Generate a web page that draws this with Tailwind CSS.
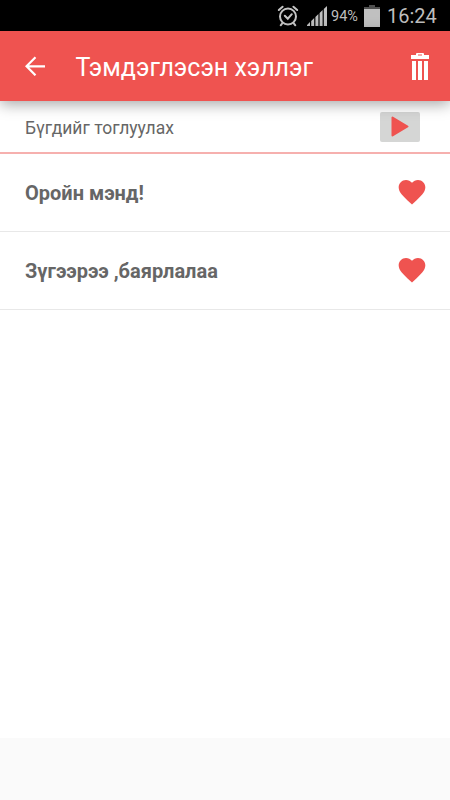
<!DOCTYPE html>
<html lang="mn">
<head>
<meta charset="utf-8">
<title>Тэмдэглэсэн хэллэг</title>
<script src="https://cdn.jsdelivr.net/npm/@tailwindcss/browser@4"></script>
</head>
<body class="bg-[#fafafa] font-[Roboto,'Noto_Sans',sans-serif]">
<div class="flex h-[800px] w-[450px] flex-col overflow-hidden">
  <div class="flex h-[31px] shrink-0 items-center justify-end bg-black pr-[13px] text-[#bebebe]">
    <svg class="mr-2 h-[22px] w-[22px]" viewBox="0 0 22 22" fill="none" stroke="#c4c4c4" stroke-width="2" stroke-linecap="round">
      <circle cx="11" cy="11.5" r="8"/>
      <path d="M7.8 10.7l3 3 4-4.5M1.8 5l3.8-3.3M20.2 5l-3.8-3.3M5.2 18.3l-1.5 2M16.8 18.3l1.5 2"/>
    </svg>
    <svg class="mr-1 h-5 w-5" viewBox="0 0 20 20" fill="#c0c0c0">
      <path d="M0 20v-1l3-3v4zM4.2 20v-5l3-3v8zM8.4 20V11l3-3v12zM12.6 20V7l3-3v16zM16.8 20V3L20 0v20z"/>
    </svg>
    <span class="w-[33px] pt-[3px] text-[14.5px] leading-none">94%</span>
    <svg class="mr-[7px] h-[24px] w-[16px]" viewBox="0 0 16 24"><path fill="#505050" d="M5 1h6v2h5v3H0V3h5z"/><path fill="#c0c0c0" d="M0 5h16v18H0z"/></svg>
    <span class="w-[50px] text-[20px] leading-none">16:24</span>
  </div>
  <header class="relative z-10 flex h-[70px] shrink-0 items-center bg-[#ef5350] pr-[21px] pl-[25px] text-white shadow-[0_3px_14px_rgba(0,0,0,0.36)]">
    <svg class="h-5 w-5" viewBox="0 0 20 20" fill="none" stroke="white" stroke-width="2.2"><path d="M10.5 1.3l-9 9 9 9M1.5 10.3H20"/></svg>
    <h1 class="ml-[30.5px] flex-1 pt-[2px] text-[25px] leading-none whitespace-nowrap">Тэмдэглэсэн хэллэг</h1>
    <svg class="h-[27px] w-[18px]" viewBox="0 0 18 27" fill="white" fill-rule="evenodd"><path d="M0 2h5V1q0-1 1-1h6q1 0 1 1v1h5v4H0zM7 1.5h4v1H7zM1 8h4v19H1zM7 8h4v19H7zM13 8h4v19h-4z"/></svg>
  </header>
  <main class="h-[637px] shrink-0 bg-white text-[#666]">
    <div class="flex h-[53px] items-center justify-between border-b-2 border-[#f6b0ae] pr-[30px] pl-[25px]">
      <span class="pt-[4px] text-[17.5px]">Бүгдийг тоглуулах</span>
      <button class="flex h-[30px] w-10 items-center justify-center rounded-[2px] bg-[#d5d6d5]">
        <svg class="h-[21px] w-[18px]" viewBox="0 0 18 21"><path fill="#ef5350" stroke="#ef5350" stroke-width="2" stroke-linejoin="round" d="M1.5 1.5v18l15-9z"/></svg>
      </button>
    </div>
    <div class="flex h-[78px] items-center justify-between border-b border-[#e8e8e8] pr-[22px] pl-[25px]">
      <span class="text-[20px] font-bold">Оройн мэнд!</span>
      <svg class="mb-[2px] h-8 w-8" viewBox="0 0 24 24" fill="#ef5350"><path d="M12 21.35l-1.45-1.32C5.4 15.36 2 12.28 2 8.5 2 5.42 4.42 3 7.5 3c1.74 0 3.41.81 4.5 2.09C13.09 3.81 14.76 3 16.5 3 19.58 3 22 5.42 22 8.5c0 3.78-3.4 6.86-8.55 11.54z"/></svg>
    </div>
    <div class="flex h-[78px] items-center justify-between border-b border-[#e8e8e8] pr-[22px] pl-[25px]">
      <span class="text-[20px] font-bold">Зүгээрээ ,баярлалаа</span>
      <svg class="mb-[2px] h-8 w-8" viewBox="0 0 24 24" fill="#ef5350"><path d="M12 21.35l-1.45-1.32C5.4 15.36 2 12.28 2 8.5 2 5.42 4.42 3 7.5 3c1.74 0 3.41.81 4.5 2.09C13.09 3.81 14.76 3 16.5 3 19.58 3 22 5.42 22 8.5c0 3.78-3.4 6.86-8.55 11.54z"/></svg>
    </div>
  </main>
</div>
</body>
</html>
